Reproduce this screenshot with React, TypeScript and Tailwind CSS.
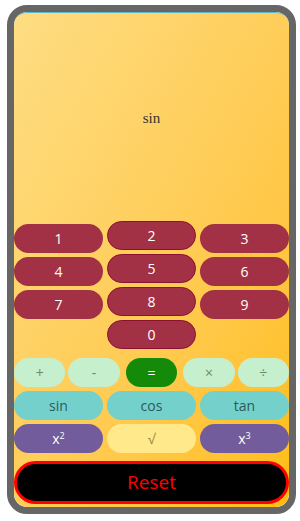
import React from 'react';

const font = { fontFamily: '"Open Sans", "Noto Sans", sans-serif' };

function Pill({
  label,
  className,
}: {
  label: React.ReactNode;
  className: string;
}) {
  return (
    <button
      className={`h-[29px] rounded-full flex items-center justify-center text-[14px] leading-none ${className}`}
    >
      {label}
    </button>
  );
}

export default function App() {
  const num = 'bg-[#a33145] text-white w-full';
  const mid = 'bg-[#a33145] text-white w-full border border-[#8c1030] -translate-y-[3px]';
  const op = 'bg-[#c6efce] text-[#6b8a6b] flex-1';

  return (
    <div className="w-[300px] h-[521px] bg-white pt-[5px] pl-[7px]" style={font}>
      <div className="w-[289px] h-[509px] border-[7px] border-[#666666] rounded-[20px] overflow-hidden">
        <div className="h-full flex flex-col border-t border-[#5fb8c9] bg-gradient-to-br from-[#fedd82] to-[#ffbd0a] rounded-[13px]">
          {/* Display */}
          <div
            className="h-[211px] flex items-center justify-center text-[15px] text-[#333]"
            style={{ fontFamily: '"Liberation Serif", serif' }}
          >
            sin
          </div>

          {/* Numbers */}
          <div className="grid grid-cols-3 gap-x-[4px] gap-y-[4px]">
            <Pill label="1" className={num} />
            <Pill label="2" className={mid} />
            <Pill label="3" className={num} />
            <Pill label="4" className={num} />
            <Pill label="5" className={mid} />
            <Pill label="6" className={num} />
            <Pill label="7" className={num} />
            <Pill label="8" className={mid} />
            <Pill label="9" className={num} />
            <div />
            <Pill label="0" className={mid} />
            <div />
          </div>

          {/* Operators */}
          <div className="flex gap-[3px] mt-[6px]">
            <Pill label="+" className={op} />
            <Pill label="-" className={op} />
            <Pill label="=" className="bg-[#148a08] text-white flex-1 mx-[3px]" />
            <Pill label="×" className={op} />
            <Pill label="÷" className={op} />
          </div>

          {/* Trig */}
          <div className="grid grid-cols-3 gap-[4px] mt-[4px]">
            <Pill label="sin" className="bg-[#74d0cb] text-[#2d5a5a] w-full" />
            <Pill label="cos" className="bg-[#74d0cb] text-[#2d5a5a] w-full" />
            <Pill label="tan" className="bg-[#74d0cb] text-[#2d5a5a] w-full" />
          </div>

          {/* Powers */}
          <div className="grid grid-cols-3 gap-[4px] mt-[4px]">
            <Pill
              label={
                <span>
                  x<sup className="text-[9px]">2</sup>
                </span>
              }
              className="bg-[#725c9c] text-white w-full"
            />
            <Pill label="√" className="bg-[#ffe98a] text-[#9a8a3a] w-full" />
            <Pill
              label={
                <span>
                  x<sup className="text-[9px]">3</sup>
                </span>
              }
              className="bg-[#725c9c] text-white w-full"
            />
          </div>

          {/* Reset */}
          <button className="mt-[8px] h-[43px] w-full rounded-full bg-black border-[3px] border-[#ff0000] text-[#ff0000] text-[19px] flex items-center justify-center">
            Reset
          </button>
        </div>
      </div>
    </div>
  );
}
